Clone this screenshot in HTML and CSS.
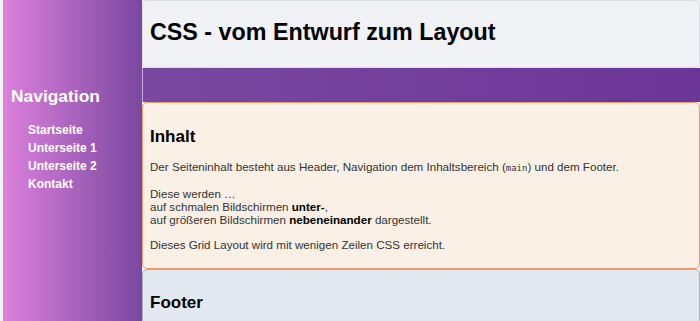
FILE: index.html
```html
<!DOCTYPE html>
<html lang="de">
<head>
  <meta charset="UTF-8">
  <meta name="viewport" content="width=device-width, initial-scale=1.0">
  <title>CSS - vom Entwurf zum Layout</title>
  <link rel="stylesheet" href="styles.css">
</head>
<body>
  <div class="page">
    <header class="site-header">
      <h1>CSS - vom Entwurf zum Layout</h1>
    </header>

    <nav class="site-nav">
      <h2>Navigation</h2>
      <ul>
        <li><a href="#">Startseite</a></li>
        <li><a href="#">Unterseite 1</a></li>
        <li><a href="#">Unterseite 2</a></li>
        <li><a href="#">Kontakt</a></li>
      </ul>
    </nav>

    <div class="bar"></div>

    <main class="content">
      <h2>Inhalt</h2>
      <p>Der Seiteninhalt besteht aus Header, Navigation dem Inhaltsbereich (<code>main</code>) und dem Footer.</p>
      <p>Diese werden …<br>
        auf schmalen Bildschirmen <strong>unter-</strong>,<br>
        auf größeren Bildschirmen <strong>nebeneinander</strong> dargestellt.</p>
      <p>Dieses Grid Layout wird mit wenigen Zeilen CSS erreicht.</p>
    </main>

    <footer class="site-footer">
      <h2>Footer</h2>
    </footer>
  </div>
</body>
</html>
```

FILE: styles.css
```css
body {
  margin: 0;
  padding: 0 0 0 3px;
  font-family: "Liberation Sans", Arial, sans-serif;
  background-color: #f4f4f4;
  color: #222;
}
.page {
  display: grid;
  grid-template-columns: 139px 1fr;
  grid-template-rows: 68px 34px 167px auto;
  min-height: 321px;
}
.site-header {
  grid-column: 2;
  grid-row: 1;
  background-color: #f0f2f5;
  border: 1px solid #dcdde2;
  border-radius: 5px;
  padding: 0 7px 4px 7px;
  display: flex;
  align-items: center;
}
.site-header h1 {
  margin: 0;
  font-size: 23.3px;
  color: #000;
}
.site-nav {
  grid-column: 1;
  grid-row: 1 / 5;
  background: linear-gradient(to right, #dc80dc, #7a48a0);
  padding: 86px 8px 0 8px;
}
.site-nav h2 {
  margin: 0 0 14px 0;
  font-size: 17.4px;
  color: #fff;
}
.site-nav ul {
  list-style: none;
  margin: 0;
  padding: 0 0 0 17px;
}
.site-nav li {
  font-size: 12px;
  line-height: 18px;
}
.site-nav a {
  color: #fff;
  font-weight: bold;
  text-decoration: none;
}
.bar {
  grid-column: 2;
  grid-row: 2;
  background: linear-gradient(to right, #7a48a0, #6c3598);
  border-left: 1px solid #c9a8dc;
}
.content {
  grid-column: 2;
  grid-row: 3;
  background-color: #faf0e6;
  border: 1px solid #e89c6c;
  border-radius: 5px;
  padding: 0 7px;
  color: #333;
  font-size: 11.6px;
}
.content h2 {
  margin: 24px 0 13px 0;
  font-size: 17px;
  color: #000;
}
.content p {
  margin: 0 0 12px 0;
  line-height: 13px;
}
.content strong {
  color: #000;
}
.content code {
  font-family: "DejaVu Sans Mono", monospace;
  font-size: 9px;
}
.site-footer {
  grid-column: 2;
  grid-row: 4;
  background-color: #e1e8f0;
  border: 1px solid #a9aeb8;
  border-radius: 5px;
  padding: 0 7px;
}
.site-footer h2 {
  margin: 23px 0 10px 0;
  font-size: 17px;
  color: #000;
}
```
